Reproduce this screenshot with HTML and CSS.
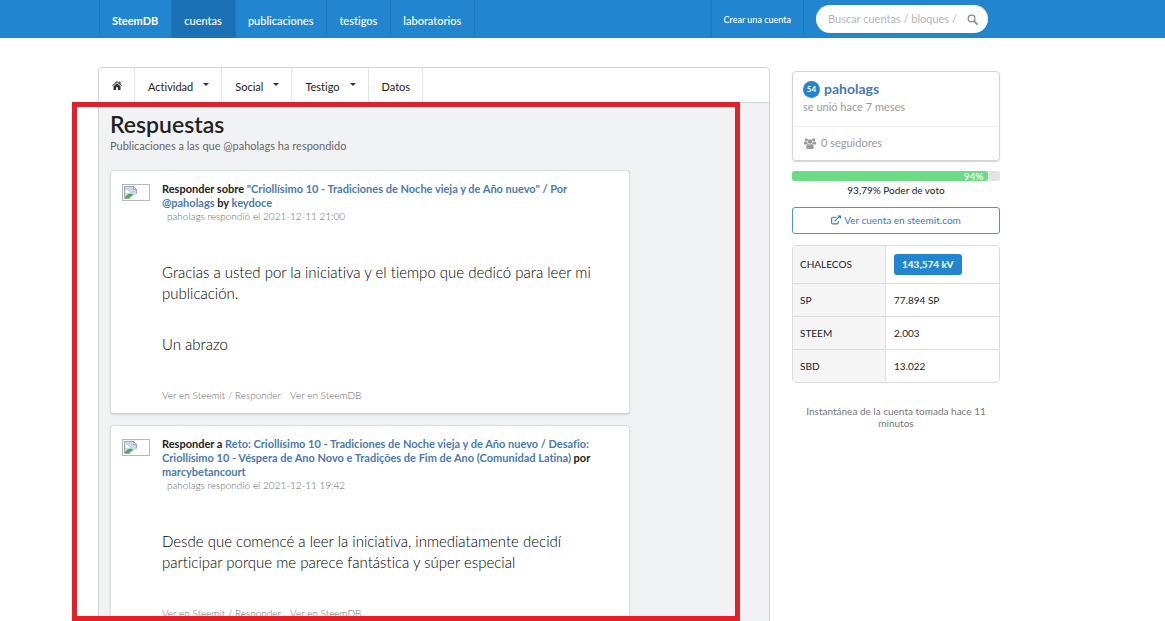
FILE: index.html
```html
<!DOCTYPE html>
<html lang="es">
<head>
<meta charset="utf-8">
<meta name="viewport" content="width=device-width, initial-scale=1">
<title>SteemDB - paholags</title>
<link rel="stylesheet" href="styles.css">
</head>
<body>
<header class="topbar">
  <div class="wrap topbar-inner">
    <nav class="topnav">
      <a class="brand" href="#">SteemDB</a>
      <a class="active" href="#">cuentas</a>
      <a href="#">publicaciones</a>
      <a href="#">testigos</a>
      <a href="#">laboratorios</a>
    </nav>
    <a class="signup" href="#">Crear una cuenta</a>
    <form class="search">
      <input type="text" placeholder="Buscar cuentas / bloques /" aria-label="Buscar">
      <svg viewBox="0 0 12 12" aria-hidden="true"><circle cx="5" cy="5" r="3.7" fill="none" stroke="#888" stroke-width="1.4"/><path d="M7.8 7.8 11 11" stroke="#888" stroke-width="1.8" stroke-linecap="round"/></svg>
    </form>
  </div>
</header>
<div class="wrap columns">
  <main class="panel">
    <nav class="tabs">
      <a class="home" href="#" aria-label="Inicio"><svg viewBox="0 0 10 9"><path fill="#333" d="M5 0 0 4.500l.6.6L5 1.300l4.400 3.800.6-.6-1.500-1.400V.4H7.200v1.500zM5 2.200 1.500 5.200V9h2.600V6.200h1.800V9h2.600V5.200z"/></svg></a>
      <a href="#">Actividad <span class="caret"></span></a>
      <a href="#">Social <span class="caret"></span></a>
      <a href="#">Testigo <span class="caret"></span></a>
      <a href="#">Datos</a>
    </nav>
    <section class="replies">
      <h1>Respuestas</h1>
      <p class="subtitle">Publicaciones a las que @paholags ha respondido</p>
      <article class="reply">
        <svg class="avatar" viewBox="0 0 28 17" aria-hidden="true"><rect x=".5" y=".5" width="27" height="16" fill="#fff" stroke="#b8b8b8"/><path fill="#c7d9f1" stroke="#8b9199" stroke-width=".8" d="M2.400 2.400h9l3.200 3.200v8.800H2.400z"/><path fill="#fff" d="M3.500 7.500c0-2 2.800-2 3-.3 1.700-.3 1.900 1.600.5 1.600H3.500z"/><path fill="#4ca64c" d="M2.800 14c1.500-3.200 5.200-5.500 8.500-3.200L6.500 14z"/><path fill="#fff" d="m15.200 9-7.700 6h7.700z"/><path fill="#fff" stroke="#8b9199" stroke-width=".7" d="M11.400 2.400v3.200h3.200z"/></svg>
        <div class="reply-body">
          <h2>Responder sobre <a href="#">"Criollísimo 10 - Tradiciones de Noche vieja y de Año nuevo" / Por @paholags</a> by <a href="#">keydoce</a></h2>
          <p class="meta">paholags respondió el 2021-12-11 21:00</p>
          <div class="text">
            <p>Gracias a usted por la iniciativa y el tiempo que dedicó para leer mi publicación.</p>
            <p class="spaced">Un abrazo</p>
          </div>
          <div class="actions"><a href="#">Ver en Steemit / Responder</a><a href="#">Ver en SteemDB</a></div>
        </div>
      </article>
      <article class="reply">
        <svg class="avatar" viewBox="0 0 28 17" aria-hidden="true"><rect x=".5" y=".5" width="27" height="16" fill="#fff" stroke="#b8b8b8"/><path fill="#c7d9f1" stroke="#8b9199" stroke-width=".8" d="M2.400 2.400h9l3.200 3.200v8.800H2.400z"/><path fill="#fff" d="M3.500 7.500c0-2 2.800-2 3-.3 1.700-.3 1.900 1.600.5 1.600H3.500z"/><path fill="#4ca64c" d="M2.800 14c1.500-3.200 5.200-5.500 8.500-3.200L6.500 14z"/><path fill="#fff" d="m15.200 9-7.700 6h7.700z"/><path fill="#fff" stroke="#8b9199" stroke-width=".7" d="M11.400 2.400v3.200h3.200z"/></svg>
        <div class="reply-body">
          <h2>Responder a <a href="#">Reto: Criollísimo 10 - Tradiciones de Noche vieja y de Año nuevo / Desafio: Criollísimo 10 - Véspera de Ano Novo e Tradições de Fim de Ano (Comunidad Latina)</a> por <a href="#">marcybetancourt</a></h2>
          <p class="meta">paholags respondió el 2021-12-11 19:42</p>
          <div class="text">
            <p>Desde que comencé a leer la iniciativa, inmediatamente decidí participar porque me parece fantástica y súper especial</p>
          </div>
          <div class="actions"><a href="#">Ver en Steemit / Responder</a><a href="#">Ver en SteemDB</a></div>
        </div>
      </article>
    </section>
    <div class="highlight"></div>
  </main>
  <aside class="sidebar">
    <div class="profile">
      <div class="profile-top">
        <div class="name"><span class="level">54</span><a href="#">paholags</a></div>
        <p>se unió hace 7 meses</p>
      </div>
      <div class="followers">
        <svg viewBox="0 0 12 11" aria-hidden="true"><g fill="#999"><circle cx="2.300" cy="1.800" r="1.600"/><circle cx="9.700" cy="1.800" r="1.600"/><circle cx="6" cy="3.500" r="2.300"/><path d="M0 6.600V4.800q0-1 .8-1.200 1.400.7 2.400.2.100 1.300.8 2Q2.800 5.700 2.200 6.600zM12 6.600V4.800q0-1-.8-1.200-1.400.7-2.400.2-.1 1.300-.8 2 1.200-.1 1.800.8zM2.200 9.600q0-3.300 1.700-3.700 2.100 1.400 4.200 0 1.700.4 1.700 3.700Q9.700 11 8.400 11H3.600Q2.300 11 2.200 9.600z"/></g></svg>
        <span>0 seguidores</span>
      </div>
    </div>
    <div class="power">
      <div class="track"><div class="fill" style="width:94%">94%</div></div>
      <p>93,79% Poder de voto</p>
    </div>
    <a class="visit" href="#"><svg viewBox="0 0 11 10" aria-hidden="true"><path fill="none" stroke="#2b7fc0" d="M6 2H2Q.7 2 .7 3.200V8Q.7 9.300 2 9.300h4.800Q8 9.300 8 8V6M4 6.300 9.500 1" stroke-width="1.200"/><path fill="#2b7fc0" d="M7 0h4v4z"/></svg>Ver cuenta en steemit.com</a>
    <table class="balances">
      <tr><th scope="row">CHALECOS</th><td><span class="label">143,574 kV</span></td></tr>
      <tr><th scope="row">SP</th><td>77.894 SP</td></tr>
      <tr><th scope="row">STEEM</th><td>2.003</td></tr>
      <tr><th scope="row">SBD</th><td>13.022</td></tr>
    </table>
    <p class="snapshot">Instantánea de la cuenta tomada hace 11 minutos</p>
  </aside>
</div>
</body>
</html>
```
FILE: styles.css
```css
* { box-sizing: border-box; }
html { overflow: hidden; }
body { margin: 0; background: #fff; color: #222; font: 12px/16px Lato, sans-serif; font-variant-ligatures: none; }
a { color: #4a7ab0; text-decoration: none; }
h1, h2, p { margin: 0; }
.wrap { margin: 0 165px 0 98px; }

.topbar { background: #2185d0; }
.topbar-inner { display: flex; align-items: stretch; height: 38px; padding-right: 12px; }
.topnav { display: flex; flex: 1; border-left: 1px solid #1d79be; margin-left: 1px; font-size: 11px; }
.topbar a { display: flex; align-items: center; padding: 3px 13px 0 12px; color: #fff; border-right: 1px solid #1d79be; white-space: nowrap; }
.topnav a { font-weight: 500; }
.topbar .brand { font-weight: 700; }
.topbar .active { background: #1c71b5; }
.topbar .signup { font-size: 9px; font-weight: 500; border-left: 1px solid #1d79be; padding: 1px 12px 0; }
.search { display: flex; align-items: center; align-self: center; width: 172px; height: 28px; margin-left: 12px; padding: 0 10px 0 12px; background: #fff; border-radius: 14px; }
.search input { flex: 1; min-width: 0; padding: 0; border: 0; outline: 0; background: none; font: 11px/16px Lato, sans-serif; }
.search input::placeholder { color: #b5b5b5; }
.search svg { width: 11px; height: 11px; }

.columns { display: flex; align-items: flex-start; gap: 22px; padding-top: 29px; }
.panel { position: relative; flex: 1; min-width: 0; border: 1px solid #d4d4d5; border-radius: 4px; background: #f1f2f4; }
.tabs { display: flex; height: 35px; background: #fff; border-bottom: 1px solid #d4d4d5; border-radius: 4px 4px 0 0; font-size: 11px; }
.tabs a { display: flex; align-items: center; gap: 10px; padding: 4px 12px 0 13px; color: #222; border-right: 1px solid #e4e4e5; }
.tabs .home { padding: 0 12px 0 13px; }
.home svg { width: 10px; height: 9px; }
.caret { border: 3px solid transparent; border-top-color: #333; border-bottom: 0; margin-bottom: 6px; }
.replies { padding: 8px 11px 0; }
h1 { font-size: 23px; line-height: 26px; font-weight: 600; }
.subtitle { color: #666; font-size: 11px; line-height: 18px; }
.reply { display: flex; align-items: flex-start; gap: 12px; max-width: 520px; margin: 15px 0 11px; padding: 11px 11px 10px; background: #fff; border: 1px solid #dededf; border-bottom-color: #d0d0d2; border-radius: 4px; box-shadow: 0 1px 2px #d4d4d5; }
.reply + .reply { margin-top: 0; }
.avatar { width: 28px; height: 17px; margin-top: 2px; flex: none; }
.reply-body { flex: 1; min-width: 0; }
h2 { font-size: 11px; line-height: 14px; font-weight: 700; }
.meta { padding-left: 5px; font-size: 10px; line-height: 12px; font-weight: 300; color: #666; }
.text { padding: 40px 0 32px; font-size: 15px; line-height: 21px; font-weight: 300; color: #000; }
.spaced { margin-top: 30px; }
.actions { display: flex; gap: 9px; font-size: 10px; font-weight: 300; }
.actions a { color: #666; }
.highlight { position: absolute; top: 34px; left: -27px; right: 29px; height: 519px; border: 5px solid #e22028; pointer-events: none; }

.sidebar { width: 208px; margin-top: 4px; }
.profile { border: 1px solid #d4d4d5; border-radius: 4px; box-shadow: 0 1px 1px #d4d4d5; color: #999; font-size: 11px; }
.profile-top { padding: 8px 10px 11px; border-bottom: 1px solid #ececec; }
.profile-top p { line-height: 17px; }
.name { display: flex; align-items: center; gap: 4px; font-size: 14px; line-height: 18px; font-weight: 700; }
.level { width: 17px; height: 17px; border-radius: 50%; background: #2185d0; color: #fff; font-size: 8px; line-height: 17px; text-align: center; }
.followers { display: flex; align-items: center; gap: 5px; padding: 8px 11px 9px; }
.followers svg { width: 12px; height: 11px; }
.power { margin-top: 10px; text-align: center; font-size: 10px; }
.track { height: 10px; background: #e4e4e4; border-radius: 3px; }
.fill { height: 10px; padding-right: 4px; background: #6bdb84; border-radius: 3px; color: #e8f8ec; font-weight: 700; line-height: 10px; text-align: right; }
.power p { margin-top: 1px; }
.visit { display: flex; align-items: center; justify-content: center; gap: 3px; height: 27px; margin-top: 9px; padding-bottom: 2px; border: 1px solid #4a9aba; border-radius: 3px; color: #2b7fc0; font-size: 10px; }
.visit svg { width: 10px; height: 10px; }
.balances { width: 100%; margin-top: 11px; border: 1px solid #dcdcdd; border-radius: 4px; border-spacing: 0; font-size: 10px; overflow: hidden; }
.balances th, .balances td { height: 33px; padding: 0 8px 1px; text-align: left; font-weight: 400; border-top: 1px solid #dcdcdd; }
.balances th { width: 93px; padding-left: 7px; background: #f5f5f5; border-right: 1px solid #dcdcdd; }
.balances tr:first-child > * { height: 37px; border-top: 0; }
.label { display: inline-block; padding: 2px 8px 3px; background: #2185d0; color: #fff; border-radius: 3px; font-weight: 700; }
.snapshot { margin-top: 22px; padding: 0 8px; font-size: 10px; line-height: 12px; text-align: center; color: #777; }
```
